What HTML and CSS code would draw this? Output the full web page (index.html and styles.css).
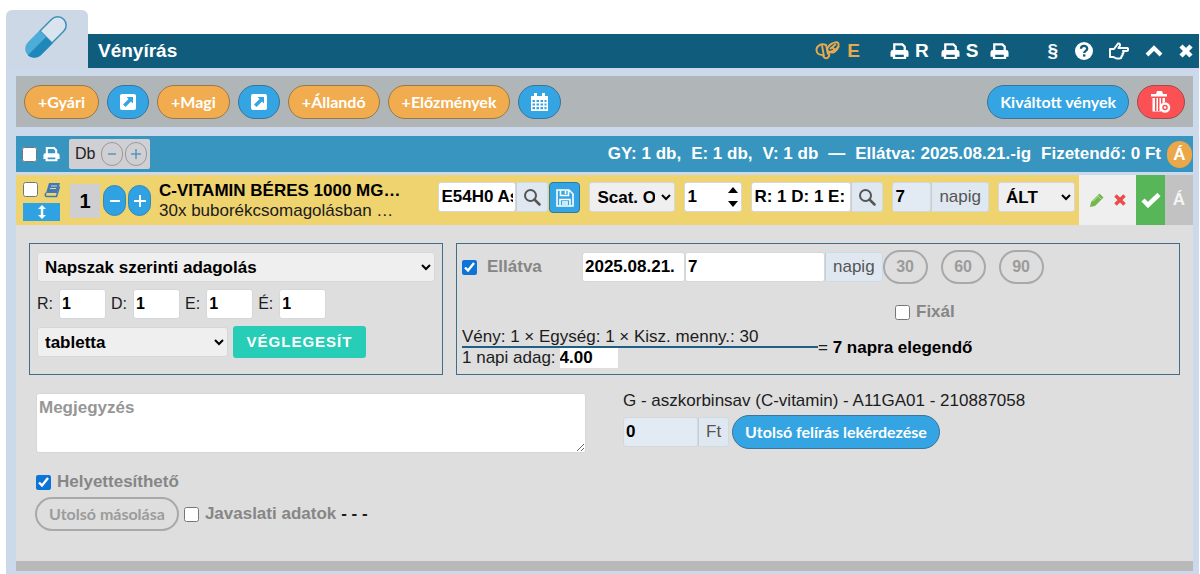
FILE: index.html
```html
<!doctype html>
<html lang="hu">
<head>
<meta charset="UTF-8">
<meta name="viewport" content="width=device-width, initial-scale=1">
<title>Vényírás</title>
<link rel="stylesheet" href="styles.css">
</head>
<body>
	<!-- icons used more than once -->
	<svg class="defs" aria-hidden="true">
		<symbol id="print" viewBox="0 0 20 18">
			<path d="M4.500 9V2h8.500l2.500 2.500V9" fill="none" stroke="currentColor" stroke-width="2.400"/>
			<path fill="currentColor" fill-rule="evenodd" d="M3 8h14a2.500 2.500 0 0 1 2.500 2.500V15H17v2.500H3V15H.5v-4.500A2.500 2.500 0 0 1 3 8zm2.500 5v2.300h9V13z"/>
		</symbol>
		<symbol id="open" viewBox="0 0 16 16">
			<path fill="currentColor" fill-rule="evenodd" d="M2 0h12a2 2 0 0 1 2 2v12a2 2 0 0 1-2 2H2a2 2 0 0 1-2-2V2A2 2 0 0 1 2 0zM6.500 3l2 2-5.500 5.500 2.500 2.500L11 7.500l2 2V3z"/>
		</symbol>
		<symbol id="search" viewBox="0 0 18 18">
			<circle cx="7.500" cy="7.500" r="5.500" fill="none" stroke="currentColor" stroke-width="2"/>
			<path d="M11.500 11.500L16.500 16.500" stroke="currentColor" stroke-width="2.500" stroke-linecap="round"/>
		</symbol>
	</svg>

	<div class="window">
		<header class="head">
			<div class="tab">
				<svg width="48" height="48" viewBox="0 0 48 48">
					<g transform="rotate(45 24 24)">
						<path d="M15.500 24V7.500a8.500 8.500 0 0 1 17 0V24z" fill="#d9e4ef" stroke="#3b8fb5" stroke-width="1.500"/>
						<path d="M14.800 24h18.400v16.500a9.200 9.200 0 0 1-18.400 0z" fill="#4badd8"/>
						<path d="M24 24h9.200v16.500a9.200 9.200 0 0 1-9.200 9.200z" fill="#2088b9"/>
					</g>
				</svg>
			</div>
			<div class="titlebar">
				<h1>Vényírás</h1>
				<div class="tools">
					<button type="button" class="tool orange">
						<svg width="26" height="20" viewBox="0 0 26 20" fill="none" stroke="currentColor" stroke-width="1.900">
							<path d="M11 4C6 2 1 5 1.500 9.500S6 14 8 14c0 3 3 4 5 2.500s1-4 0-5.500M7 4.500l2 11M11 3.500l2 10"/>
							<ellipse cx="18" cy="6" rx="6.500" ry="3.500" transform="rotate(-35 18 6)"/>
							<path d="M15 8l6-5M14 11c4 2 8-1 10-6M17 6l3 3"/>
						</svg>
						E
					</button>
					<div class="group">
						<button type="button" class="tool"><svg width="19" height="18"><use href="#print"/></svg>R</button>
						<button type="button" class="tool"><svg width="19" height="18"><use href="#print"/></svg>S</button>
						<button type="button" class="tool" aria-label="print"><svg width="19" height="18"><use href="#print"/></svg></button>
					</div>
					<div class="group wide">
						<button type="button" class="tool">§</button>
						<button type="button" class="tool" aria-label="help">
							<svg width="18" height="18" viewBox="0 0 18 18"><circle cx="9" cy="9" r="9" fill="currentColor"/><path d="M6 6.800C6 3 12.200 3 12.200 6.700 12.200 9 9.200 8.700 9.200 11" fill="none" stroke="#0f5c7d" stroke-width="2.300"/><path d="M8 12.300h2.400v2.300H8z" fill="#0f5c7d"/></svg>
						</button>
						<button type="button" class="tool" aria-label="point">
							<svg width="20" height="18" viewBox="0 0 20 18" fill="none" stroke="currentColor" stroke-width="2" stroke-linejoin="round"><path d="M1 7h4l4-5.500c2-.5 2.500 1.500 1.500 3L9.500 6H18c1.500 0 1.500 3 0 3h-4c1 1 .5 2.500-.5 2.800.5 1-.2 2.200-1 2.400 0 1.500-.7 2.300-2 2.300H8C6.500 16.500 5.500 15 4 15H1z"/></svg>
						</button>
						<button type="button" class="tool" aria-label="collapse">
							<svg width="18" height="12" viewBox="0 0 18 12"><path d="M2 10l7-7 7 7" fill="none" stroke="currentColor" stroke-width="4"/></svg>
						</button>
						<button type="button" class="tool" aria-label="close">
							<svg width="14" height="14" viewBox="0 0 14 14"><path d="M2 2l10 10M12 2L2 12" stroke="currentColor" stroke-width="4.500"/></svg>
						</button>
					</div>
				</div>
			</div>
		</header>

		<div class="panel">
			<div class="toolbar">
				<button type="button" class="pill pill-orange">+Gyári</button>
				<button type="button" class="pill pill-blue" aria-label="open"><svg width="16" height="16"><use href="#open"/></svg></button>
				<button type="button" class="pill pill-orange">+Magi</button>
				<button type="button" class="pill pill-blue" aria-label="open"><svg width="16" height="16"><use href="#open"/></svg></button>
				<button type="button" class="pill pill-orange">+Állandó</button>
				<button type="button" class="pill pill-orange">+Előzmények</button>
				<button type="button" class="pill pill-blue" aria-label="calendar">
					<svg width="17" height="18" viewBox="0 0 17 18"><path fill="currentColor" fill-rule="evenodd" d="M0 3h3V0h3v3h5V0h3v3h3v15H0zm1.500 4v2h2.500V7zm4 0v2H8V7zm4 0v2H12V7zm4 0v2h2V7zm-12 3.500v2h2.500v-2zm4 0v2H8v-2zm4 0v2H12v-2zm4 0v2h2v-2zm-12 3.500v2.300h2.500V14zm4 0v2.300H8V14zm4 0v2.300H12V14zm4 0v2.300h2V14z"/></svg>
				</button>
				<button type="button" class="pill pill-blue push">Kiváltott vények</button>
				<button type="button" class="pill pill-red" aria-label="delete">
					<svg width="20" height="22" viewBox="0 0 20 22"><path fill="currentColor" d="M0 3h5l1-3h5l1 3h4v2.500H0zM1.500 7H4v13h1.500V7H7v13h1.500V7H10v13.500H1.500zM11.500 7H14v4l-2.500 1z"/><circle cx="14" cy="16.500" r="4" fill="none" stroke="currentColor" stroke-width="2.500"/><circle cx="14" cy="16.500" r="1.200" fill="currentColor"/></svg>
				</button>
			</div>

			<div class="summary">
				<input type="checkbox" class="check" aria-label="Összes">
				<svg class="summary-print" width="17" height="16"><use href="#print"/></svg>
				<div class="db">
					<span>Db</span>
					<button type="button" class="round" aria-label="minus"><svg width="10" height="10" viewBox="0 0 10 10"><path d="M1 5h8" stroke="#5b95b8" stroke-width="1.500"/></svg></button>
					<button type="button" class="round" aria-label="plus"><svg width="10" height="10" viewBox="0 0 10 10"><path d="M0 5h10M5 0v10" stroke="#5b95b8" stroke-width="1.500"/></svg></button>
				</div>
				<div class="totals">
					<span>GY: 1 db,</span>
					<span>E: 1 db,</span>
					<span>V: 1 db</span>
					<span>—</span>
					<span>Ellátva: 2025.08.21.-ig</span>
					<span>Fizetendő: 0 Ft</span>
				</div>
				<span class="badge">Á</span>
			</div>

			<div class="item">
				<div class="marks">
					<input type="checkbox" class="check" aria-label="Kijelölés">
					<svg width="17" height="16" viewBox="0 0 17 16"><path d="M5 1h11l-3 10H2z" fill="#4179b5"/><path d="M2 11c-1.500 2-.5 3.500 1 3.500h9.500l3-10" fill="none" stroke="#4179b5" stroke-width="1.600"/><path d="M7 4h6M6 6.500h6" stroke="#e4d9a0"/></svg>
					<button type="button" class="move" aria-label="move">
						<svg width="8" height="14" viewBox="0 0 8 14"><path d="M4 0l4 4H5.200v6H8l-4 4-4-4h2.800V4H0z" fill="#fff"/></svg>
					</button>
				</div>
				<span class="count">1</span>
				<div class="steps">
					<button type="button" class="step" aria-label="minus"><svg width="12" height="12" viewBox="0 0 12 12"><path d="M1 6h10" stroke="#fff" stroke-width="2"/></svg></button>
					<button type="button" class="step" aria-label="plus"><svg width="14" height="14" viewBox="0 0 14 14"><path d="M1 7h12M7 1v12" stroke="#fff" stroke-width="2"/></svg></button>
				</div>
				<div class="drug">
					<b>C-VITAMIN BÉRES 1000 MG…</b>
					<span>30x buborékcsomagolásban …</span>
				</div>
				<div class="fields">
					<div class="combo">
						<input type="text" class="field bno" value="E54H0 Aszkorbinsav" aria-label="BNO">
						<button type="button" class="addon" aria-label="search"><svg width="18" height="18"><use href="#search"/></svg></button>
						<button type="button" class="save" aria-label="save">
							<svg width="18" height="18" viewBox="0 0 18 18" fill="none" stroke="#fff" stroke-width="1.600"><path d="M1 1h12l4 4v12H1zM4.500 1v5.500h8V1M4 17v-6.500h10V17M9.500 2v3M6 13h6M6 15h6"/></svg>
						</button>
					</div>
					<select class="field scat" aria-label="Kiszerelés"><option>Scat. Orig.</option></select>
					<div class="combo">
						<input type="text" class="field amount" value="1" aria-label="Mennyiség">
						<div class="spin">
							<button type="button" aria-label="up"><svg width="10" height="6" viewBox="0 0 10 6"><path d="M5 0l5 6H0z"/></svg></button>
							<button type="button" aria-label="down"><svg width="10" height="6" viewBox="0 0 10 6"><path d="M5 6l5-6H0z"/></svg></button>
						</div>
					</div>
					<div class="combo">
						<input type="text" class="field dose" value="R: 1 D: 1 E: 1 É: 1" aria-label="Adagolás">
						<button type="button" class="addon" aria-label="search"><svg width="18" height="18"><use href="#search"/></svg></button>
					</div>
					<div class="combo">
						<input type="text" class="field days" id="days" value="7">
						<label class="addon" for="days">napig</label>
					</div>
					<select class="field alt" aria-label="Jogcím"><option>ÁLT</option></select>
				</div>
				<div class="actions">
					<button type="button" aria-label="edit"><svg width="16" height="16" viewBox="0 0 16 16"><path d="M1 15l1-5L10.500 1.500l4 4L6 14z" fill="#72b84c"/><path d="M9 4l3 3M4 9.500l6-6" stroke="#b5dd9c"/></svg></button>
					<button type="button" aria-label="remove"><svg width="12" height="12" viewBox="0 0 12 12"><path d="M1.500 1.500l9 9M10.500 1.500l-9 9" stroke="#ec4b4b" stroke-width="3.500"/></svg></button>
				</div>
				<button type="button" class="ok" aria-label="ok"><svg width="20" height="16" viewBox="0 0 20 16"><path d="M2 8l5 5L18 2.500" fill="none" stroke="#fff" stroke-width="4.500"/></svg></button>
				<button type="button" class="state">Á</button>
			</div>

			<div class="detail">
				<div class="boxes">
					<div class="box dosing">
						<select class="field" aria-label="Adagolás módja"><option>Napszak szerinti adagolás</option></select>
						<div class="line times">
							<label>R: <input type="text" class="field" value="1"></label>
							<label>D: <input type="text" class="field" value="1"></label>
							<label>E: <input type="text" class="field" value="1"></label>
							<label>É: <input type="text" class="field" value="1"></label>
						</div>
						<div class="line">
							<select class="field unit" aria-label="Egység"><option>tabletta</option></select>
							<button type="button" class="final">VÉGLEGESÍT</button>
						</div>
					</div>
					<div class="box supply">
						<div class="line">
							<label class="tick supplied"><input type="checkbox" class="check" checked>Ellátva</label>
							<input type="text" class="field date" value="2025.08.21." aria-label="Dátum">
							<div class="combo">
								<input type="text" class="field until" id="until" value="7">
								<label class="addon" for="until">napig</label>
							</div>
							<div class="presets">
								<button type="button" class="pill pill-ghost">30</button>
								<button type="button" class="pill pill-ghost">60</button>
								<button type="button" class="pill pill-ghost">90</button>
							</div>
						</div>
						<label class="tick fix"><input type="checkbox" class="check">Fixál</label>
						<div class="formula">
							<div class="fraction">
								<div class="top">Vény: 1 × Egység: 1 × Kisz. menny.: 30</div>
								<label class="bottom">1 napi adag: <input type="text" value="4.00"></label>
							</div>
							<div>= <b>7 napra elegendő</b></div>
						</div>
					</div>
				</div>

				<div class="notes">
					<textarea class="field" placeholder="Megjegyzés" aria-label="Megjegyzés"></textarea>
					<div class="agent">
						<div>G - aszkorbinsav (C-vitamin) - A11GA01 - 210887058</div>
						<div class="line">
							<div class="combo">
								<input type="text" class="field price" id="price" value="0">
								<label class="addon" for="price">Ft</label>
							</div>
							<button type="button" class="pill pill-blue">Utolsó felírás lekérdezése</button>
						</div>
					</div>
				</div>

				<label class="tick"><input type="checkbox" class="check" checked>Helyettesíthető</label>
				<div class="line last">
					<button type="button" class="pill pill-ghost">Utolsó másolása</button>
					<label class="tick"><input type="checkbox" class="check">Javaslati adatok</label>
					<b>- - -</b>
				</div>
			</div>
		</div>
	</div>
</body>
</html>
```
FILE: styles.css
```css
* {margin:0;padding:0;box-sizing:border-box;}
body{font:17px/20px "Liberation Sans",Arial,sans-serif;color:#1c1c1c;background:#fff;}
button,input,select,textarea{font:inherit;color:inherit;border:0;background:none;}
button{cursor:pointer;display:flex;align-items:center;justify-content:center;flex:none;}
svg{display:block;flex:none;}
.defs{position:absolute;width:0;height:0;}

.window{display:flex;flex-direction:column;min-height:100vh;padding:10px 1px 0 6px;}

/* header */
.head{display:flex;align-items:flex-end;}
.tab{width:82px;height:58px;padding:3px 0 0 16px;border-radius:6px 6px 0 0;background:#ccd8e6;}
.titlebar{flex:1;display:flex;align-items:center;height:34px;padding:0 6px 0 10px;background:#0f5c7d;color:#fff;}
.titlebar h1{font-size:19px;line-height:32px;}
.tools{display:flex;gap:30px;margin-left:auto;}
.group{display:flex;gap:12px;}
.group.wide{gap:16px;margin-left:8px;}
.group.wide .tool:first-child{padding:0 1px 0 0;}
.tool{gap:6px;font-size:19px;font-weight:bold;}
.orange{color:#e9a94f;}

/* toolbar */
.panel{flex:1;display:flex;flex-direction:column;padding:8px 6px 0 10px;background:#ccd9ea;}
.toolbar{display:flex;align-items:center;gap:8px;height:51px;padding:0 8px;margin-bottom:9px;background:#b0b6b8;}
.pill{height:34px;padding:0 12px;border:1px solid #6c7f88;border-radius:17px;font:bold 16px/20px Lato,sans-serif;color:#fff;}
.pill-orange{padding:0 13px;background:#f0ac4e;border-color:#97784c;}
.pill-blue{background:#34a5e2;border-color:#3a7599;}
.pill-red{padding:0 13px;background:#fb5054;border-color:#a34a4c;}
.pill-ghost{border:2px solid #a9a9a9;color:#9b9b9b;}
.push{margin-left:auto;}

/* summary row */
.summary{display:flex;align-items:center;height:36px;padding:0 1px 0 6px;margin-bottom:3px;background:#3895bf;color:#fff;}
.check{flex:none;width:15px;height:15px;accent-color:#0b74d6;}
.summary-print{margin:0 9px 0 6px;}
.db{display:flex;align-items:center;gap:2px;height:30px;padding:0 3px 0 6px;border-radius:2px;background:#d0d0d4;color:#222;font-size:16px;}
.db span{margin-right:4px;}
.round{width:22px;height:24px;border:1px solid #999;border-radius:12px;}
.totals{display:flex;gap:10px;margin-left:auto;font-weight:bold;}
.badge{width:25px;height:27px;margin-left:6px;border-radius:14px;background:#eba748;font-weight:bold;line-height:27px;text-align:center;}

/* item row */
.item{display:flex;height:50px;background:#eed36f;}
.marks{display:flex;flex-wrap:wrap;align-content:flex-start;gap:5px 6px;width:38px;margin:7px 0 0 7px;flex:none;}
.move{width:37px;height:18px;background:#2ea2e3;}
.count{width:30px;height:34px;margin:9px 3px 0 9px;background:#cfcfd1;font-size:20px;font-weight:bold;line-height:34px;text-align:center;color:#000;}
.steps{display:flex;gap:2px;margin-top:10px;}
.step{width:23px;height:31px;border:1px solid #3a86b4;border-radius:12px;background:#2ea2e3;}
.drug{flex:1;min-width:0;padding:6px 0 0 8px;white-space:nowrap;overflow:hidden;}
.drug b,.drug span{display:block;}
.drug b{color:#000;}
.fields{display:flex;gap:9px;padding-top:7px;}
.combo{display:flex;}
.field{height:30px;padding:0 2px;border:1px solid #d4d8da;border-radius:3px;background:#fff;color:#000;font-weight:bold;}
select.field{padding:0 3px;background:#efefef;}
.addon{display:flex;align-items:center;height:30px;padding:0 7px;border:1px solid #cfdae1;border-left-color:#c4d0d8;border-radius:0 3px 3px 0;background:#dfe8f0;color:#555;}
button.addon{padding:0 6px;}
.save{width:31px;height:31px;margin-left:1px;border:1px solid #2a7aa8;border-radius:4px;background:#34a5e2;}
.bno{width:78px;}
.scat{width:86px;}
.amount{width:40px;border-right:0;border-radius:3px 0 0 3px;}
.spin{display:flex;flex-direction:column;justify-content:space-between;width:18px;height:30px;padding:4px 3px;border:1px solid #d4d8da;border-left:0;border-radius:0 3px 3px 0;background:#fff;}
.dose{width:100px;}
.days{width:39px;}
.days,.price{background:#e2ebf3;}
.alt{width:77px;}
.actions{display:flex;justify-content:space-evenly;width:57px;margin-left:4px;background:#efefef;}
.actions,.ok,.state{flex:none;}
.ok{width:29px;background:#57b657;}
.state{width:28px;background:#c2c2c2;color:#f4f4f4;font-weight:bold;}

/* detail */
.detail{flex:1;padding:18px 13px 0;border-bottom:10px solid #b9b9b9;margin-bottom:3px;background:#dedede;}
.boxes{display:flex;gap:13px;}
.box{border:1px solid #3f6e89;height:132px;padding:8px 7px;}
.line{display:flex;align-items:center;}
.dosing{display:flex;flex-direction:column;gap:7px;width:414px;}
.times{gap:5px;font-size:16px;}
.times label{display:flex;align-items:center;gap:6px;}
.times .field{width:47px;}
.unit{width:191px;}
.final{width:133px;height:32px;margin-left:5px;border-radius:3px;background:#28cdb8;color:#fff;font-size:15px;font-weight:bold;letter-spacing:1px;}
.supply{flex:1;padding:6px 5px;}
.tick{display:flex;align-items:center;gap:6px;font-weight:bold;color:#868686;}
.supplied{width:120px;gap:10px;}
.date{width:103px;}
.until{width:140px;}
.presets{display:flex;gap:13px;}
.presets .pill{width:45px;padding:0;font:bold 16px/20px "Liberation Sans",Arial,sans-serif;}
.fix{margin:18px 0 5px 433px;}
.formula{display:flex;align-items:center;}
.formula b{color:#000;}
.fraction{width:356px;}
.top{border-bottom:2px solid #1f5f85;line-height:19px;}
.bottom{display:flex;align-items:center;gap:4px;}
.bottom input{width:58px;height:20px;background:#fff;color:#000;font-weight:bold;}

.notes{display:flex;gap:37px;margin:18px 0 19px 7px;}
.notes textarea{display:block;width:550px;height:60px;padding:4px 2px;line-height:20px;}
.notes textarea::placeholder{color:#969696;opacity:1;}
.agent{margin-top:-2px;}
.agent .line{gap:3px;margin-top:4px;}
.price{width:75px;}
.detail > .tick{margin:0 0 5px 7px;}
.last{gap:5px;margin-left:6px;}
```
